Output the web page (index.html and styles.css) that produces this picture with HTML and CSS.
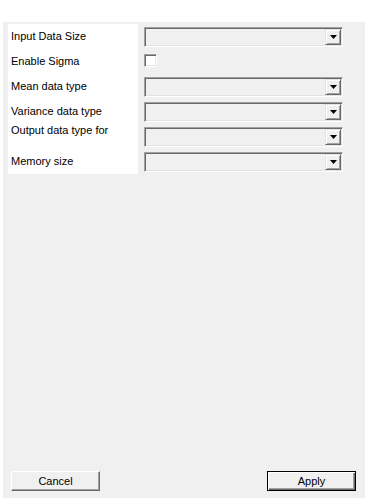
FILE: index.html
```html
<!DOCTYPE html>
<html lang="en">
<head>
	<meta charset="UTF-8">
	<title>Settings</title>
	<link rel="stylesheet" href="styles.css">
</head>
<body>
	<div id="window">
		<div id="form">
			<ul id="labels">
				<li>Input Data Size</li>
				<li>Enable Sigma</li>
				<li>Mean data type</li>
				<li>Variance data type</li>
				<li class="top">Output data type for</li>
				<li>Memory size</li>
			</ul>
			<ul id="fields">
				<li><span class="combo"><span class="drop"><svg width="7" height="4" viewBox="0 0 7 4"><polygon points="0,0 7,0 3.5,4" fill="#000"/></svg></span></span></li>
				<li><span class="check"></span></li>
				<li><span class="combo"><span class="drop"><svg width="7" height="4" viewBox="0 0 7 4"><polygon points="0,0 7,0 3.5,4" fill="#000"/></svg></span></span></li>
				<li><span class="combo"><span class="drop"><svg width="7" height="4" viewBox="0 0 7 4"><polygon points="0,0 7,0 3.5,4" fill="#000"/></svg></span></span></li>
				<li><span class="combo"><span class="drop"><svg width="7" height="4" viewBox="0 0 7 4"><polygon points="0,0 7,0 3.5,4" fill="#000"/></svg></span></span></li>
				<li><span class="combo"><span class="drop"><svg width="7" height="4" viewBox="0 0 7 4"><polygon points="0,0 7,0 3.5,4" fill="#000"/></svg></span></span></li>
			</ul>
		</div>
		<div id="buttons">
			<button class="btn">Cancel</button>
			<button class="btn default">Apply</button>
		</div>
	</div>
</body>
</html>
```

FILE: styles.css
```css
*{
	margin: 0;
	padding: 0;
	box-sizing: border-box;
}
ul{
	list-style: none;
}
body{
	background: #fff;
	font-family: "Liberation Sans", Arial, sans-serif;
	font-size: 11px;
	color: #000;
}
#window{
	margin: 22px 3px 0 3px;
	height: 476px;
	background: #f0f0f0;
	display: flex;
	flex-direction: column;
}
#form{
	display: flex;
	margin-top: 2px;
}
#labels{
	width: 130px;
	margin-left: 5px;
	background: #fff;
}
#labels li{
	height: 25px;
	line-height: 25px;
	padding-left: 3px;
	white-space: nowrap;
}
#labels .top{
	line-height: 13px;
}
#fields{
	margin-left: 6px;
}
#fields li{
	height: 25px;
	padding-top: 3px;
}
.combo{
	display: block;
	position: relative;
	width: 199px;
	height: 20px;
	background: #f0f0f0;
	border: 1px solid;
	border-color: #a0a0a0 #fff #fff #a0a0a0;
	box-shadow: inset 1px 1px #696969, inset -1px -1px #e3e3e3;
}
.drop{
	position: absolute;
	right: 1px;
	top: 1px;
	width: 16px;
	height: 16px;
	background: #f0f0f0;
	border: 1px solid;
	border-color: #e3e3e3 #696969 #696969 #e3e3e3;
	box-shadow: inset 1px 1px #fff, inset -1px -1px #a0a0a0;
	display: flex;
	align-items: center;
	justify-content: center;
}
.check{
	display: block;
	margin-top: 2px;
	width: 13px;
	height: 13px;
	background: #fff;
	border: 1px solid;
	border-color: #a0a0a0 #fff #fff #a0a0a0;
	box-shadow: inset 1px 1px #696969, inset -1px -1px #e3e3e3;
}
#buttons{
	margin-top: auto;
	display: flex;
	justify-content: space-between;
	padding: 0 9px 7px 8px;
}
.btn{
	width: 89px;
	height: 20px;
	font-family: "Liberation Sans", Arial, sans-serif;
	font-size: 11px;
	color: #000;
	background: #f0f0f0;
	border: 1px solid;
	border-color: #fff #696969 #696969 #fff;
	box-shadow: inset -1px -1px #a0a0a0;
}
.default{
	border: 1px solid #000;
	box-shadow: inset 1px 1px #fff, inset -1px -1px #696969, inset -2px -2px #a0a0a0;
}
```
